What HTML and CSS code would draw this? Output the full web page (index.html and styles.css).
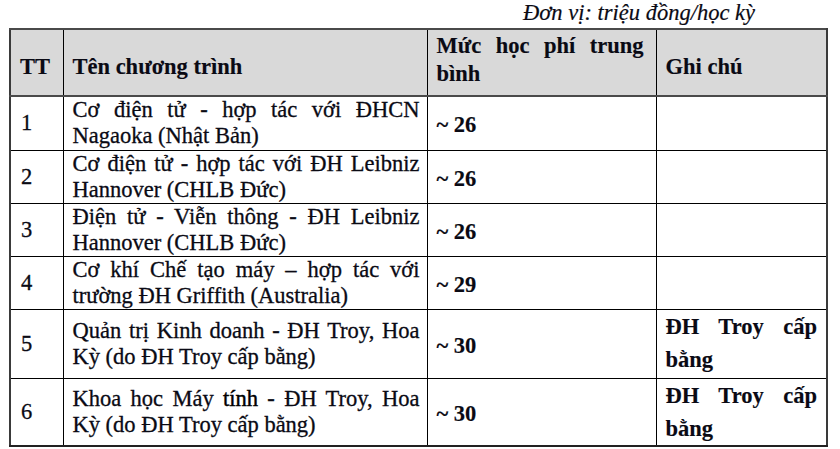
FILE: index.html
```html
<!DOCTYPE html>
<html lang="vi">
<head>
<meta charset="utf-8">
<title>Học phí</title>
<link rel="stylesheet" href="styles.css">
</head>
<body>
<div class="page">
  <div class="unit">Đơn vị: triệu đồng/học kỳ</div>
  <table class="fees">
    <colgroup>
      <col class="c-tt">
      <col class="c-name">
      <col class="c-fee">
      <col class="c-note">
    </colgroup>
    <thead>
      <tr class="r-head">
        <th class="h-mid">TT</th>
        <th class="h-mid">Tên chương trình</th>
        <th class="h-top"><span class="jl">Mức học phí trung</span><span class="ll">bình</span></th>
        <th class="h-mid">Ghi chú</th>
      </tr>
    </thead>
    <tbody>
      <tr class="r-std r-first">
        <td class="num">1</td>
        <td class="name"><span class="jl">Cơ điện tử - hợp tác với ĐHCN</span><span class="ll">Nagaoka (Nhật Bản)</span></td>
        <td class="fee">~ 26</td>
        <td class="note"></td>
      </tr>
      <tr class="r-std">
        <td class="num">2</td>
        <td class="name"><span class="jl">Cơ điện tử - hợp tác với ĐH Leibniz</span><span class="ll">Hannover (CHLB Đức)</span></td>
        <td class="fee">~ 26</td>
        <td class="note"></td>
      </tr>
      <tr class="r-std">
        <td class="num">3</td>
        <td class="name"><span class="jl">Điện tử - Viễn thông - ĐH Leibniz</span><span class="ll">Hannover (CHLB Đức)</span></td>
        <td class="fee">~ 26</td>
        <td class="note"></td>
      </tr>
      <tr class="r-std">
        <td class="num">4</td>
        <td class="name"><span class="jl">Cơ khí Chế tạo máy – hợp tác với</span><span class="ll">trường ĐH Griffith (Australia)</span></td>
        <td class="fee">~ 29</td>
        <td class="note"></td>
      </tr>
      <tr class="r-5">
        <td class="num">5</td>
        <td class="name"><span class="jl">Quản trị Kinh doanh - ĐH Troy, Hoa</span><span class="ll">Kỳ (do ĐH Troy cấp bằng)</span></td>
        <td class="fee">~ 30</td>
        <td class="note"><span class="jl">ĐH Troy cấp</span><span class="ll">bằng</span></td>
      </tr>
      <tr class="r-6">
        <td class="num">6</td>
        <td class="name"><span class="jl">Khoa học Máy <span class="dark">tính</span> - ĐH Troy, Hoa</span><span class="ll">Kỳ (do ĐH Troy cấp bằng)</span></td>
        <td class="fee">~ 30</td>
        <td class="note"><span class="jl">ĐH Troy cấp</span><span class="ll">bằng</span></td>
      </tr>
    </tbody>
  </table>
</div>
</body>
</html>
```
FILE: styles.css
```css
html, body {
  margin: 0;
  padding: 0;
  background: #ffffff;
}

body {
  font-family: "Liberation Serif", "Times New Roman", serif;
  font-size: 22.5px;
  color: #0a0a14;
}

.page {
  width: 840px;
  height: 449px;
  padding-left: 9px;
  box-sizing: border-box;
  overflow: hidden;
}

.unit {
  height: 28px;
  line-height: 26px;
  font-style: italic;
  text-align: right;
  padding-right: 73px;
  width: 819px;
  box-sizing: border-box;
  -webkit-text-stroke: 0.2px currentColor;
}

.fees {
  border-collapse: collapse;
  table-layout: fixed;
  width: 819px;
  border-top: 2px solid #4a4a4a;
  border-left: 2px solid #3a3a3a;
  border-right: 2px solid #3a3a3a;
  border-bottom: 2px solid #222;
}

.c-tt { width: 53px; }
.c-name { width: 364px; }
.c-fee { width: 229px; }
.c-note { width: 171px; }

.fees th,
.fees td {
  border: 1px solid #000;
  padding: 0 9px 0 9px;
  line-height: 26px;
  text-align: left;
  overflow: hidden;
  -webkit-text-stroke: 0.3px currentColor;
}

.fees th {
  background: #d9d9d9;
  font-weight: bold;
  border-bottom: 2px solid #4a4a4a;
  -webkit-text-stroke: 0.15px currentColor;
}

.r-head { height: 67px; }
.h-mid {
  vertical-align: middle;
  padding-top: 8px !important;
}
.h-top {
  vertical-align: top;
  line-height: 28px !important;
  padding-top: 2px !important;
  padding-right: 12px !important;
}

.r-std { height: 53px; }
.r-first { height: 54px; }
.r-5 { height: 69px; }
.r-6 { height: 66px; }

.fees td { vertical-align: middle; }

.num { padding-left: 10px !important; }
.name { padding-right: 7px !important; }

.fee {
  font-weight: bold;
  padding-top: 4px !important;
  -webkit-text-stroke: 0.15px currentColor !important;
}

.note {
  font-weight: bold;
  line-height: 33px !important;
  vertical-align: top !important;
  -webkit-text-stroke: 0.15px currentColor !important;
}

.jl {
  display: block;
  text-align: justify;
  text-align-last: justify;
}

.ll {
  display: block;
  text-align: left;
}

.dark {
  color: #000;
  -webkit-text-stroke: 0.45px #000;
}
```
